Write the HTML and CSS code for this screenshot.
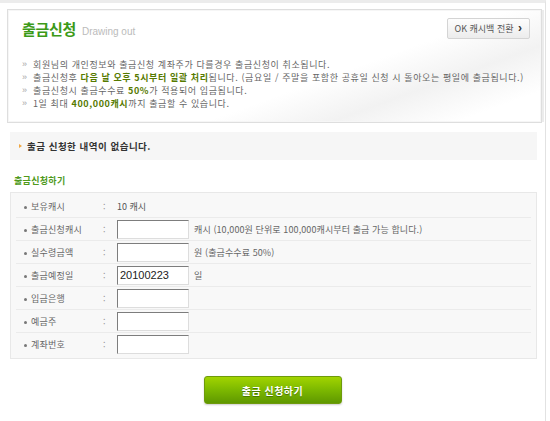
FILE: index.html
```html
<!DOCTYPE html>
<html lang="ko">
<head>
    <meta charset="UTF-8">
    <title>출금신청</title>
    <link rel="stylesheet" href="styles.css">
</head>
<body>
    <div class="page">
        <div class="header-box">
            <div class="title-row">
                <h1>출금신청 <span class="sub">Drawing out</span></h1>
                <a class="btn-switch" href="#">OK 캐시백 전환 <b>&rsaquo;</b></a>
            </div>
            <ul class="notes">
                <li>회원님의 개인정보와 출금신청 계좌주가 다를경우 출금신청이 취소됩니다.</li>
                <li>출금신청후 <strong>다음 날 오후 5시부터 일괄 처리</strong>됩니다. (금요일 / 주말을 포함한 공휴일 신청 시 돌아오는 평일에 출금됩니다.)</li>
                <li>출금신청시 출금수수료 <strong>50%</strong>가 적용되어 입금됩니다.</li>
                <li>1일 최대 <strong>400,000캐시</strong>까지 출금할 수 있습니다.</li>
            </ul>
        </div>

        <div class="notice">출금 신청한 내역이 없습니다.</div>

        <h2 class="section-title">출금신청하기</h2>

        <div class="form-box">
            <div class="row">
                <span class="label">보유캐시</span><span class="colon">:</span>
                <span class="value">10 캐시</span>
            </div>
            <div class="row">
                <span class="label">출금신청캐시</span><span class="colon">:</span>
                <input type="text"><span class="hint">캐시 (10,000원 단위로 100,000캐시부터 출금 가능 합니다.)</span>
            </div>
            <div class="row">
                <span class="label">실수령금액</span><span class="colon">:</span>
                <input type="text"><span class="hint">원 (출금수수료 50%)</span>
            </div>
            <div class="row">
                <span class="label">출금예정일</span><span class="colon">:</span>
                <input type="text" value="20100223"><span class="hint">일</span>
            </div>
            <div class="row">
                <span class="label">입금은행</span><span class="colon">:</span>
                <input type="text">
            </div>
            <div class="row">
                <span class="label">예금주</span><span class="colon">:</span>
                <input type="text">
            </div>
            <div class="row">
                <span class="label">계좌번호</span><span class="colon">:</span>
                <input type="text">
            </div>
        </div>

        <div class="actions">
            <button class="btn-submit">출금 신청하기</button>
        </div>
    </div>
</body>
</html>
```

FILE: styles.css
```css
body {
    margin: 0;
    background: #fff;
    font-family: "Noto Sans CJK KR", "Liberation Sans", sans-serif;
    color: #666;
}

.page {
    width: 545px;
    height: 414px;
    border-top: 3px solid #ececec;
    border-right: 1px solid #e2e2e2;
    border-bottom: 4px solid #ececec;
    box-sizing: content-box;
    padding-top: 6px;
}

.header-box {
    margin-left: 7px;
    width: 535px;
    height: 114px;
    box-sizing: border-box;
    border: 1px solid #dedede;
    box-shadow: inset 0 0 0 1px #f6f6f6, 3px 0 0 -1px #ececec;
    background: linear-gradient(160deg, #fff 0%, #fff 60%, #f2f2f2 75%, #fff 90%);
    padding: 7px 11px 0 14px;
}

.title-row {
    display: flex;
    justify-content: space-between;
    align-items: flex-start;
}

h1 {
    margin: 0;
    font-size: 15px;
    line-height: 24px;
    font-weight: bold;
    color: #3c9a18;
    letter-spacing: -0.3px;
}

h1 .sub {
    font-family: "Liberation Sans", sans-serif;
    font-size: 10px;
    font-weight: normal;
    color: #bbb;
    letter-spacing: 0;
    margin-left: 2px;
}

.btn-switch {
    display: block;
    margin-top: 1px;
    height: 19px;
    line-height: 19px;
    padding: 0 7px;
    font-size: 9px;
    color: #555;
    text-decoration: none;
    border: 1px solid #d4d4d4;
    border-radius: 2px;
    background: linear-gradient(#fdfdfd, #ececec);
}

.btn-switch b {
    font-family: "Liberation Sans", sans-serif;
    font-size: 12px;
    color: #333;
    margin-left: 2px;
}

.notes {
    list-style: none;
    margin: 14px 0 0;
    padding: 0;
    font-size: 9px;
    line-height: 13px;
    letter-spacing: 0.6px;
}

.notes li {
    position: relative;
    padding-left: 11px;
    white-space: nowrap;
}

.notes li::before {
    content: "»";
    position: absolute;
    left: 0;
    top: 0;
    color: #a8a8a8;
    font-family: "Liberation Sans", sans-serif;
    font-size: 9px;
}

.notes strong {
    color: #567a00;
}

.notice {
    margin: 9px 0 0 10px;
    width: 527px;
    height: 28px;
    line-height: 28px;
    box-sizing: border-box;
    background: #f6f6f6;
    padding-left: 17px;
    position: relative;
    font-size: 9.5px;
    font-weight: bold;
    color: #333;
    letter-spacing: 0.5px;
}

.notice::before {
    content: "";
    position: absolute;
    left: 9px;
    top: 12px;
    border-left: 3px solid #f0a640;
    border-top: 2px solid transparent;
    border-bottom: 2px solid transparent;
}

.section-title {
    margin: 14px 0 0 14px;
    font-size: 9px;
    line-height: 14px;
    font-weight: bold;
    color: #4f9a1c;
    letter-spacing: 0.3px;
}

.form-box {
    margin: 4px 0 0 10px;
    width: 527px;
    height: 167px;
    box-sizing: border-box;
    background: #f8f8f8;
    border: 1px solid #e8e8e8;
    padding: 2px 5px 0;
}

.row {
    display: flex;
    align-items: center;
    height: 22px;
    border-bottom: 1px solid #ebebeb;
    font-size: 9px;
    color: #666;
}

.row:last-child {
    border-bottom: none;
}

.label {
    position: relative;
    flex: none;
    width: 87px;
    box-sizing: border-box;
    padding-left: 15px;
    letter-spacing: 0.2px;
}

.label::before {
    content: "";
    position: absolute;
    left: 8px;
    top: 6px;
    width: 3px;
    height: 3px;
    border-radius: 50%;
    background: #777;
}

.colon {
    flex: none;
    width: 14px;
    color: #999;
}

.value {
    color: #555;
}

.row input {
    flex: none;
    width: 72px;
    height: 19px;
    box-sizing: border-box;
    margin: 0;
    padding: 0 2px;
    border: 1px solid #ddd;
    border-top-color: #7d7d7d;
    border-left-color: #7d7d7d;
    background: #fff;
    font-family: "Liberation Sans", sans-serif;
    font-size: 11px;
    color: #222;
}

.hint {
    margin-left: 5px;
    letter-spacing: 0.1px;
}

.actions {
    display: flex;
    justify-content: center;
    margin-top: 17px;
}

.btn-submit {
    width: 138px;
    height: 28px;
    border: 1px solid #6e9a0c;
    border-radius: 3px;
    background: linear-gradient(#a2d400, #7cb800 50%, #5f9800);
    box-shadow: 0 1px 2px rgba(0, 0, 0, 0.2);
    font-family: "Noto Sans CJK KR", sans-serif;
    font-size: 10px;
    font-weight: bold;
    color: #fff;
    text-shadow: 0 1px 0 #4a7a00;
    letter-spacing: 0.5px;
    cursor: pointer;
}
```
